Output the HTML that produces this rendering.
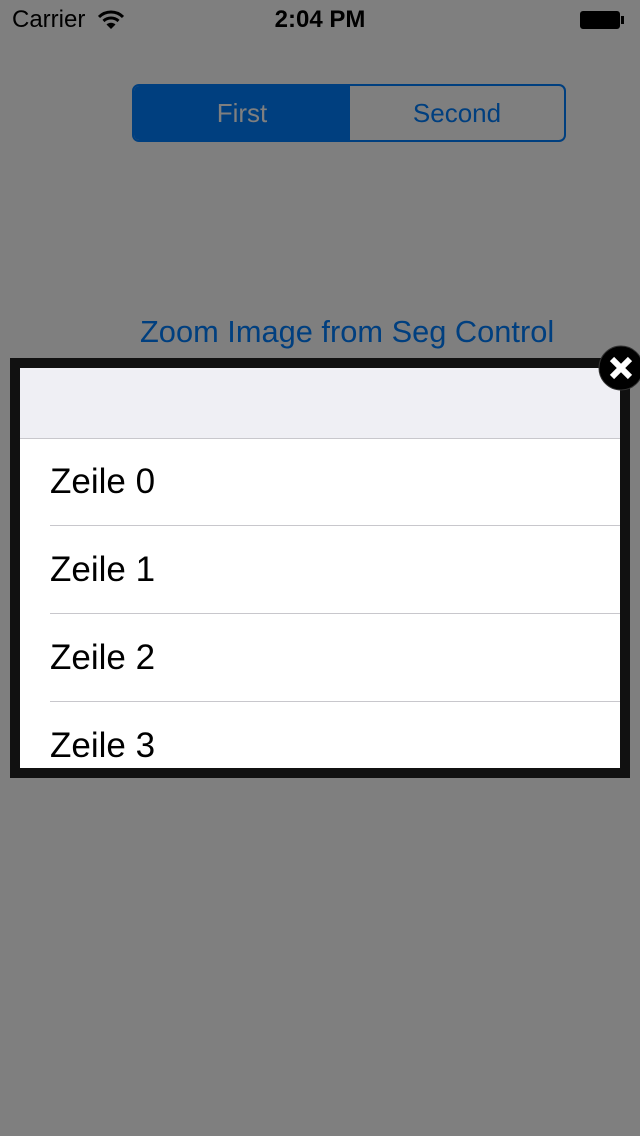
<!DOCTYPE html><html><head><style>
body{margin:0;width:640px;height:1136px;background:#7f7f7f;position:relative;overflow:hidden;font-family:"Liberation Sans",sans-serif}
.a{position:absolute}
.z{font-size:35px}
</style></head><body>
<div class="a" style="left:12px;top:6px;font-size:24px;color:#000">Carrier</div>
<svg class="a" style="left:98px;top:10px" width="26" height="20" viewBox="0 0 26 20"><path d="M1 7 A17 17 0 0 1 25 7" stroke="#000" stroke-width="3" fill="none"/><path d="M5.5 11 A11 11 0 0 1 20.5 11" stroke="#000" stroke-width="3" fill="none"/><path d="M13 19 L8.5 14.5 A6.5 6.5 0 0 1 17.5 14.5 Z" fill="#000"/></svg>
<div class="a" style="left:0;width:640px;text-align:center;top:6px;font-size:24px;font-weight:bold">2:04 PM</div>
<div class="a" style="left:580px;top:11px;width:40px;height:18px;border:2px solid #000;border-radius:3px;box-sizing:border-box;background:#000"></div>
<div class="a" style="left:621px;top:16px;width:3px;height:8px;background:#000"></div>
<div class="a" style="left:132px;top:84px;width:434px;height:58px;border:2px solid #003f7f;border-radius:7px;box-sizing:border-box;overflow:hidden;font-size:26px">
<div class="a" style="left:0;top:0;width:216px;height:54px;background:#003f7f;color:#7f7f7f;text-align:center;line-height:54px">First</div>
<div class="a" style="left:216px;top:0;width:214px;height:54px;color:#003f7f;text-align:center;line-height:54px">Second</div></div>
<div class="a" style="left:140px;top:314px;font-size:30.8px;color:#003f7f">Zoom Image from Seg Control</div>
<div class="a" style="left:10px;top:358px;width:620px;height:420px;background:#111"></div>
<div class="a" style="left:20px;top:368px;width:600px;height:400px;background:#fff;overflow:hidden">
<div class="a" style="left:0;top:0;width:600px;height:70px;background:#efeff4;border-bottom:1px solid #c8c7cc"></div>
<div class="a z" style="left:30px;top:94px">Zeile 0</div>
<div class="a" style="left:30px;top:157px;width:570px;height:1px;background:#c8c7cc"></div>
<div class="a z" style="left:30px;top:182px">Zeile 1</div>
<div class="a" style="left:30px;top:245px;width:570px;height:1px;background:#c8c7cc"></div>
<div class="a z" style="left:30px;top:270px">Zeile 2</div>
<div class="a" style="left:30px;top:333px;width:570px;height:1px;background:#c8c7cc"></div>
<div class="a z" style="left:30px;top:358px">Zeile 3</div>
</div>
<svg class="a" style="left:598px;top:345px" width="46" height="46" viewBox="0 0 46 46"><circle cx="23" cy="23" r="22" fill="#000" stroke="#333" stroke-width="1"/><path d="M14 14 L32 32 M32 14 L14 32" stroke="#fff" stroke-width="6"/></svg>
</body></html>
